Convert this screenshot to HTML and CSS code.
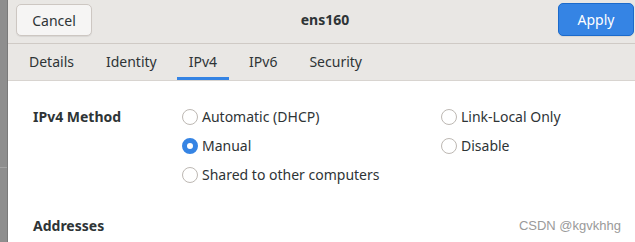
FILE: index.html
```html
<!DOCTYPE html>
<html lang="en">
<head>
    <meta charset="UTF-8">
    <meta name="viewport" content="width=device-width, initial-scale=1.0">
    <title>ens160</title>
    <link rel="stylesheet" href="styles.css">
</head>
<body>
    <div class="backdrop"><div class="backdrop-top"></div></div>

    <div class="dialog">
        <header class="headerbar">
            <button class="btn">Cancel</button>
            <h1 class="title">ens160</h1>
            <button class="btn btn-apply">Apply</button>
        </header>

        <nav class="tabs">
            <span class="tab">Details</span>
            <span class="tab">Identity</span>
            <span class="tab active">IPv4</span>
            <span class="tab">IPv6</span>
            <span class="tab">Security</span>
        </nav>

        <main class="content">
            <section class="method">
                <div class="label">IPv4 Method</div>
                <div class="options">
                    <label class="radio"><span class="dot"></span>Automatic (DHCP)</label>
                    <label class="radio"><span class="dot"></span>Link-Local Only</label>
                    <label class="radio"><span class="dot checked"></span>Manual</label>
                    <label class="radio"><span class="dot"></span>Disable</label>
                    <label class="radio"><span class="dot"></span>Shared to other computers</label>
                </div>
            </section>

            <h2 class="label section">Addresses</h2>

            <span class="watermark">CSDN @kgvkhhg</span>
        </main>
    </div>
</body>
</html>
```

FILE: styles.css
```css
body {
    margin: 0;
    display: flex;
    height: 242px;
    overflow: hidden;
    font-family: 'Noto Sans', 'Open Sans', sans-serif;
    font-size: 14px;
    color: #2e3436;
}
.backdrop {
    width: 7px;
    background: #8e8e8e;
    border-right: 1px solid #7a7a7a;
    flex-shrink: 0;
}
.backdrop-top {
    height: 167px;
    border-bottom: 1px solid #a4a4a4;
}
.dialog {
    flex: 1;
    display: flex;
    flex-direction: column;
    background: #ffffff;
}
.headerbar {
    height: 43px;
    display: flex;
    align-items: flex-start;
    justify-content: space-between;
    padding: 0 1px 0 8px;
    background: #e9e7e4;
    border-bottom: 1px solid #cfcac5;
}
.btn {
    margin-top: 4px;
    width: 76px;
    height: 32px;
    border: 1px solid #cdc7c2;
    border-radius: 5px;
    background: #f6f5f4;
    font-family: inherit;
    font-size: 14px;
    color: #2e3436;
    box-shadow: 0 1px 1px rgba(0, 0, 0, 0.07);
}
.btn-apply {
    margin-top: 3px;
    height: 33px;
    background: #3584e4;
    border-color: #1b6acb;
    color: #ffffff;
}
.title {
    margin: 0;
    font-size: 14px;
    font-weight: bold;
    line-height: 40px;
}
.tabs {
    height: 36px;
    display: flex;
    gap: 8px;
    padding-left: 9px;
    background: #e9e7e4;
    border-bottom: 1px solid #d8d4d0;
}
.tab {
    padding: 0 12px;
    line-height: 36px;
    color: #2e3436;
    box-sizing: border-box;
}
.tab.active {
    border-bottom: 3px solid #3584e4;
}
.content {
    position: relative;
    flex: 1;
    padding: 24px 0 0 25px;
}
.method {
    display: flex;
}
.label {
    width: 149px;
    flex-shrink: 0;
    font-weight: bold;
    margin: 0;
    font-size: 14px;
    line-height: 24px;
}
.options {
    display: grid;
    grid-template-columns: 259px auto;
    row-gap: 5px;
}
.radio {
    display: flex;
    align-items: center;
    gap: 4px;
    line-height: 24px;
}
.dot {
    width: 14px;
    height: 14px;
    border: 1px solid #bdb8b3;
    border-radius: 50%;
    background: #ffffff;
}
.dot.checked {
    width: 6px;
    height: 6px;
    border: 5px solid #3584e4;
}
.section {
    margin-top: 27px;
}
.watermark {
    position: absolute;
    right: 14px;
    bottom: 9px;
    font-family: 'Liberation Sans', Arial, sans-serif;
    font-size: 13px;
    color: #9a9a9a;
}
```
